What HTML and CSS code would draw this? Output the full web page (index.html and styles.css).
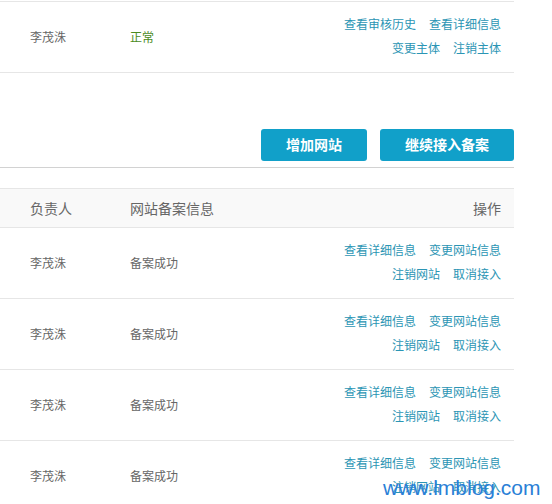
FILE: index.html
```html
<!DOCTYPE html>
<html>
	<head>
		<meta charset="UTF-8">
		<title>备案管理</title>
		<link rel="stylesheet" href="styles.css">
	</head>
	<body>
		<div class="wrap">
			<div class="top">
				<div class="row">
					<div class="c1">李茂洙</div>
					<div class="c2 ok">正常</div>
					<div class="ops">
						<div><a>查看审核历史</a><a>查看详细信息</a></div>
						<div><a>变更主体</a><a>注销主体</a></div>
					</div>
				</div>
			</div>
			<div class="actions">
				<span class="btn b1">增加网站</span>
				<span class="btn b2">继续接入备案</span>
			</div>
			<div class="list">
				<div class="row head">
					<div class="c1">负责人</div>
					<div class="c2">网站备案信息</div>
					<div class="ops">操作</div>
				</div>
				<div class="row">
					<div class="c1">李茂洙</div>
					<div class="c2">备案成功</div>
					<div class="ops">
						<div><a>查看详细信息</a><a>变更网站信息</a></div>
						<div><a>注销网站</a><a>取消接入</a></div>
					</div>
				</div>
				<div class="row">
					<div class="c1">李茂洙</div>
					<div class="c2">备案成功</div>
					<div class="ops">
						<div><a>查看详细信息</a><a>变更网站信息</a></div>
						<div><a>注销网站</a><a>取消接入</a></div>
					</div>
				</div>
				<div class="row">
					<div class="c1">李茂洙</div>
					<div class="c2">备案成功</div>
					<div class="ops">
						<div><a>查看详细信息</a><a>变更网站信息</a></div>
						<div><a>注销网站</a><a>取消接入</a></div>
					</div>
				</div>
				<div class="row">
					<div class="c1">李茂洙</div>
					<div class="c2">备案成功</div>
					<div class="ops">
						<div><a>查看详细信息</a><a>变更网站信息</a></div>
						<div><a>注销网站</a><a>取消接入</a></div>
					</div>
				</div>
			</div>
		</div>
		<div class="mark">www.lmblog.com</div>
	</body>
</html>
```

FILE: styles.css
```css
*{
	margin: 0;
	padding: 0;
}
body{
	height: 504px;
	overflow: hidden;
	background: #fff;
	font-family: "Noto Sans CJK SC", "Liberation Sans", sans-serif;
	font-size: 12px;
	color: #666;
}
.wrap{
	width: 514px;
}
.top{
	margin-top: 1px;
	border-top: 1px solid #e6e6e6;
}
.row{
	display: flex;
	align-items: center;
	height: 68px;
	padding-bottom: 2px;
	border-bottom: 1px solid #e6e6e6;
}
.c1{
	width: 130px;
	padding-left: 30px;
	box-sizing: border-box;
	flex: none;
}
.c2{
	width: 150px;
	flex: none;
}
.ok{
	color: #4b8b1e;
}
.ops{
	flex: 1;
	text-align: right;
	padding-right: 13px;
	line-height: 24px;
}
.ops a{
	color: #2b95b4;
	margin-left: 13px;
	cursor: pointer;
}
.actions{
	display: flex;
	justify-content: flex-end;
	gap: 13px;
	margin-top: 56px;
	padding-bottom: 6px;
	border-bottom: 1px solid #d2d2d2;
}
.btn{
	height: 32px;
	line-height: 31px;
	text-align: center;
	background: #11a0c9;
	color: #fff;
	font-size: 14px;
	font-weight: bold;
	border-radius: 3px;
}
.b1{
	width: 106px;
}
.b2{
	width: 134px;
}
.list{
	margin-top: 20px;
	border-top: 1px solid #e6e6e6;
}
.head{
	height: 37px;
	padding-bottom: 1px;
	background: #f9f9f9;
	font-size: 14px;
}
.mark{
	position: absolute;
	left: 383px;
	top: 477px;
	font-family: "Liberation Sans", sans-serif;
	font-size: 21px;
	line-height: 22px;
	color: #2a7fd6;
}
```
